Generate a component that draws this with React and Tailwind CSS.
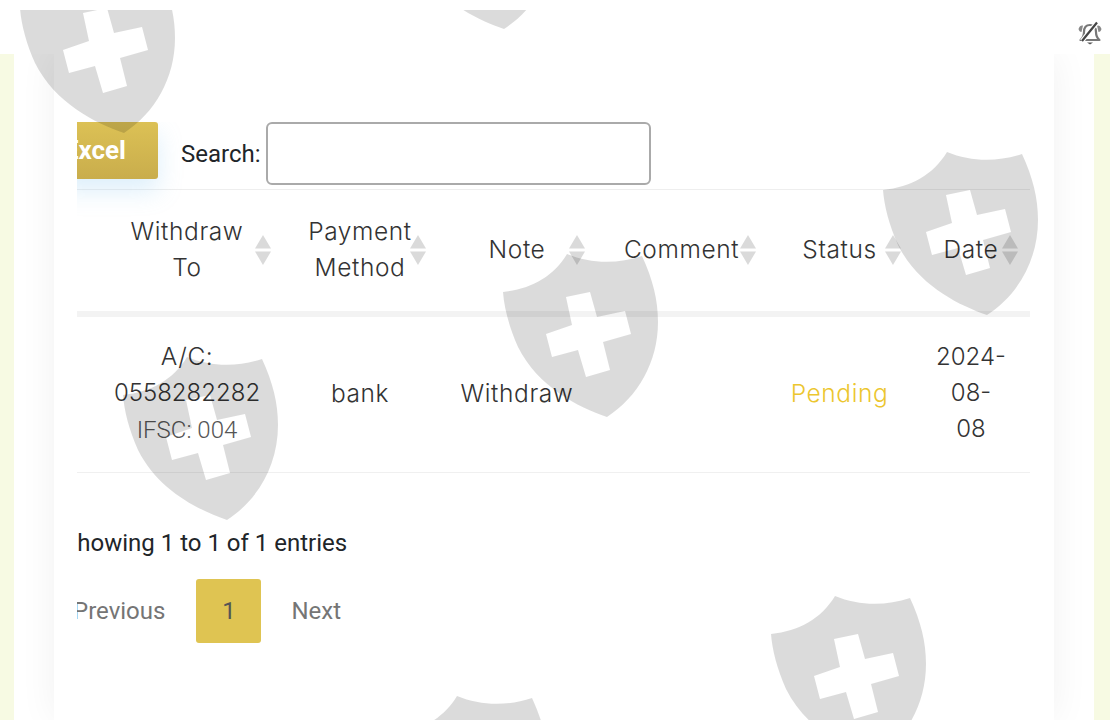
const shields = [
    [883, 140],
    [503, 242],
    [123, 345],
    [771, 584],
    [20, -42],
    [400, -146],
    [393, 684],
]

const shieldPath =
    'M0 40C28 37 50 25 64 2C88 12 115 12 139 4C150 28 155 48 155 70C155 110 135 145 104 165C75 155 35 135 15 95C6 75 1 55 0 40Z' +
    'M63 45L87 40L94 65L122 59L128 82L100 90L107 118L83 125L75 98L49 105L43 82L69 73Z'

function Watermark() {
    return (
        <svg className="pointer-events-none absolute left-0 top-[10px]" width="1110" height="710" viewBox="0 0 1110 710">
            {shields.map(([x, y]) => (
                <path key={`${x}-${y}`} d={shieldPath} transform={`translate(${x} ${y})`} fill="#000" fillOpacity="0.14" fillRule="evenodd" />
            ))}
        </svg>
    )
}

function MutedBell() {
    return (
        <svg width="26" height="26" viewBox="0 0 26 26" fill="none">
            <path d="M13 4C9 4 7 7 7 11C7 15 6 17 3.5 19H22.5C20 17 19 15 19 11C19 7 17 4 13 4Z" stroke="#777" strokeWidth="2.2" strokeLinejoin="round" />
            <path d="M1.5 8C2.5 5 4 4 6 4.5L4.5 11C3 11 2 10 1.5 8ZM24.5 8C23.5 5 22 4 20 4.5L21.5 11C23 11 24 10 24.5 8Z" fill="#888" />
            <path d="M10 21.5H16L13 23.5Z" fill="#555" />
            <path d="M20 1.5L5 20" stroke="#fff" strokeWidth="4.5" />
            <path d="M20 1.5L5 20" stroke="#444" strokeWidth="2.2" />
        </svg>
    )
}

function HeadCell({ children, arrowClass }) {
    return (
        <th className="relative border-b-[6px] border-[#f3f3f3] p-0 pb-[2px] text-center font-light">
            {children}
            <svg className={arrowClass} width="18" height="32" viewBox="0 0 18 32">
                <path d="M9 1L17 14.5H1Z" fill="#dadada" />
                <path d="M9 31L17 17.5H1Z" fill="#dadada" />
            </svg>
        </th>
    )
}

export default function App() {
    return (
        <div className="relative flex h-[720px] w-[1110px] flex-col overflow-hidden bg-white font-['Roboto',sans-serif]">
            <header className="flex h-[54px] items-start justify-end bg-white pr-[7px] pt-[21px]">
                <MutedBell />
            </header>
            <main className="flex flex-1 overflow-hidden bg-[#f7fae3] pl-[14px] pr-[16px]">
                <div className="flex w-[1080px] overflow-hidden bg-white px-[40px]">
                    <div className="w-[1000px] bg-white pl-[23px] pr-[24px] pt-[68px] shadow-[0_0_36px_rgba(0,0,0,0.06)]">
                        <div className="overflow-hidden">
                            <div className="flex items-start pb-[4px]">
                                <button className="-ml-[21px] h-[57px] w-[102px] rounded-[3px] bg-linear-to-b from-[#dcc155] to-[#c9ad4c] pr-[32px] text-right text-[26px] font-bold text-white shadow-[0_12px_24px_rgba(120,190,240,0.25)]">
                                    Excel
                                </button>
                                <label className="ml-[23px] flex items-center text-[24px] text-[#212529]">
                                    <span className="mt-[1px]">Search:</span>
                                    <input className="ml-[5px] h-[63px] w-[385px] rounded-[6px] border-2 border-[#aaa] bg-white" />
                                </label>
                            </div>
                            <table className="w-[953px] table-fixed border-t border-[#eee] font-['Inter',sans-serif] text-[24.5px] tracking-[0.6px] text-[#333]">
                                <colgroup>
                                    <col className="w-[15px]" />
                                    <col className="w-[190px]" />
                                    <col className="w-[156px]" />
                                    <col className="w-[158px]" />
                                    <col className="w-[171px]" />
                                    <col className="w-[145px]" />
                                    <col className="w-[118px]" />
                                </colgroup>
                                <thead>
                                    <tr className="h-[124px] leading-[36px]">
                                        <th className="border-b-[6px] border-[#f3f3f3] p-0" />
                                        <HeadCell arrowClass="absolute right-[10px] top-1/2 -translate-y-1/2">Withdraw<br />To</HeadCell>
                                        <HeadCell arrowClass="absolute right-[11px] top-1/2 -translate-y-1/2">Payment<br />Method</HeadCell>
                                        <HeadCell arrowClass="absolute right-[10px] top-1/2 -translate-y-1/2">Note</HeadCell>
                                        <HeadCell arrowClass="absolute right-[10px] top-1/2 -translate-y-1/2">Comment</HeadCell>
                                        <HeadCell arrowClass="absolute right-[10px] top-1/2 -translate-y-1/2">Status</HeadCell>
                                        <HeadCell arrowClass="absolute right-[11px] top-1/2 -translate-y-1/2">Date</HeadCell>
                                    </tr>
                                </thead>
                                <tbody>
                                    <tr className="h-[159px] border-b border-[#f0f0f0] text-center font-light leading-[36px] [&>td]:pb-[2px]">
                                        <td />
                                        <td>
                                            A/C:<br />
                                            <span className="text-[24px] tracking-normal">0558282282</span><br />
                                            <span className="font-['Roboto',sans-serif] text-[24px] tracking-normal text-[#555]">IFSC: 004</span>
                                        </td>
                                        <td>bank</td>
                                        <td>Withdraw</td>
                                        <td />
                                        <td className="text-[#ecc62f]">Pending</td>
                                        <td className="text-[24px] tracking-normal">2024-<br />08-<br />08</td>
                                    </tr>
                                </tbody>
                            </table>
                            <p className="-ml-[14px] mt-[54px] text-[24px] leading-[33px] text-[#212529]">Showing 1 to 1 of 1 entries</p>
                            <nav className="mt-[19px] flex items-center text-[24px] text-[#757575]">
                                <span className="-ml-[4px]">Previous</span>
                                <span className="ml-[31px] flex h-[64px] w-[65px] items-center justify-center rounded-[3px] bg-[#dfc452] text-[#555]">1</span>
                                <span className="ml-[30px]">Next</span>
                            </nav>
                        </div>
                    </div>
                </div>
            </main>
            <Watermark />
        </div>
    )
}
